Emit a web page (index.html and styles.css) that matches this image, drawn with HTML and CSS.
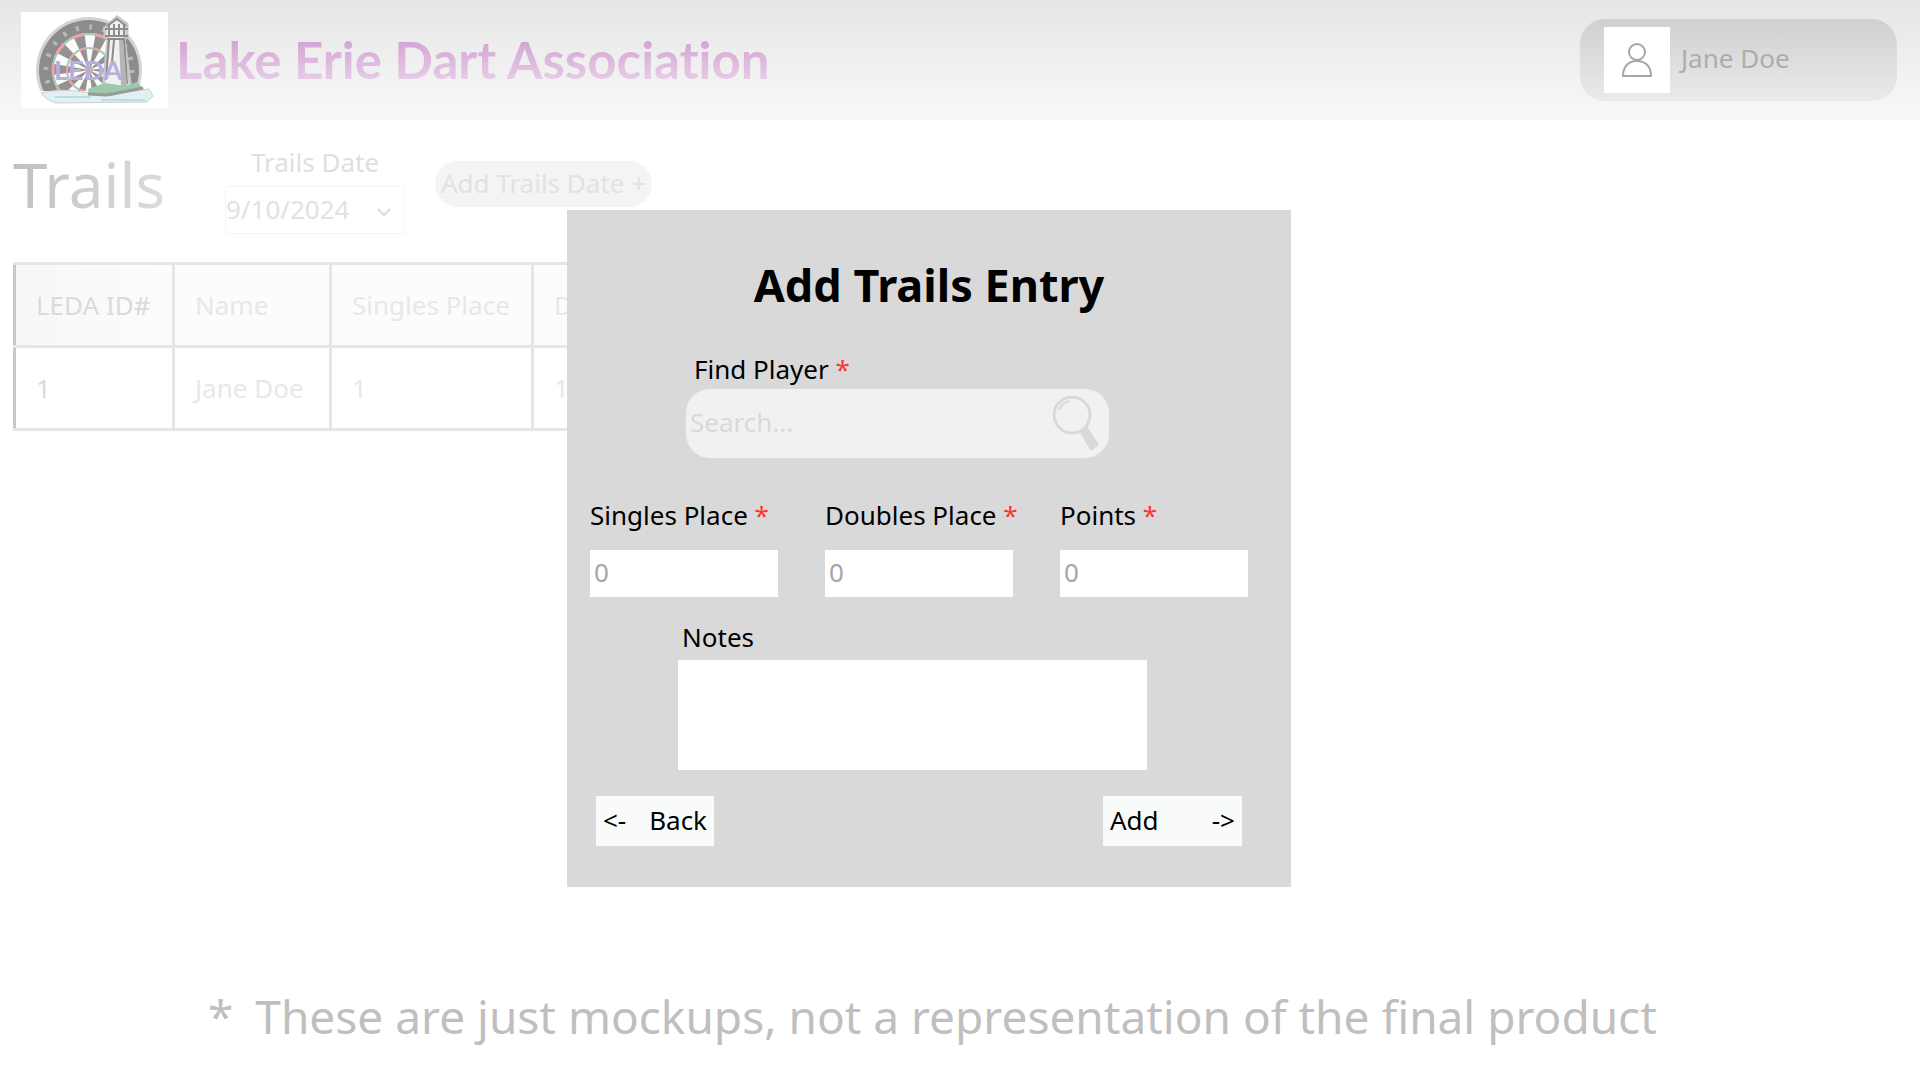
FILE: index.html
```html
<!DOCTYPE html>
<html lang="en">
<head>
<meta charset="utf-8">
<meta name="viewport" content="width=device-width, initial-scale=1">
<title>Trails - Lake Erie Dart Association</title>
<link rel="stylesheet" href="styles.css">
</head>
<body>
<div class="page">
  <header class="site-header">
    <a class="brand" href="#">
      <svg class="logo" viewBox="0 0 147 96" role="img" aria-label="LEDA logo">
        <defs>
          <clipPath id="horizon"><rect width="147" height="79"/></clipPath>
        </defs>
        <rect width="147" height="96" fill="#fff"/>
        <g clip-path="url(#horizon)" fill="none">
          <circle cx="68" cy="58" r="53" fill="#d4d4d4"/>
          <circle cx="68" cy="58" r="50" fill="#8c8c8c"/>
          <circle cx="68" cy="58" r="43" stroke="#b9b9b9" stroke-width="5" stroke-dasharray="3 10.5"/>
          <circle cx="68" cy="58" r="37" fill="#fbfbfb"/>
          <circle cx="68" cy="58" r="19" stroke="#939393" stroke-width="32" stroke-dasharray="5.97 5.97" stroke-dashoffset="3"/>
          <circle cx="68" cy="58" r="36" stroke="#9fceb4" stroke-width="2"/>
          <circle cx="68" cy="58" r="36" stroke="#eda3a3" stroke-width="3" stroke-dasharray="11.3 11.3" stroke-dashoffset="5.6"/>
          <circle cx="68" cy="58" r="22" stroke="#9fceb4" stroke-width="2"/>
          <circle cx="68" cy="58" r="22" stroke="#eda3a3" stroke-width="2" stroke-dasharray="6.9 6.9" stroke-dashoffset="3.4"/>
          <circle cx="68" cy="58" r="4" fill="#eda3a3" stroke="#9fceb4"/>
        </g>
        <path d="M84 24 84 16 88 12 96 5 106 12 106 25 103 27 110 78 82 78 87 27Z" fill="#f0f0f0" stroke="#c8c8c8" stroke-width="3"/>
        <path d="M86 14 96 7 105 14M88 13V23M93 12V23M98 12V23M103 12V23M84 17H107M84 24H107" fill="none" stroke="#8d8d8d" stroke-width="2"/>
        <path d="M86 27H104M88 28 85 68M93 28 91 50M103 28 106 72" fill="none" stroke="#8a8a8a" stroke-width="2"/>
        <path d="M98 28 100 74H106L102 28Z" fill="#b5b5b5"/>
        <path d="M20 81Q40 76 62 80T128 77L132 84 126 90 35 91Q25 88 20 81Z" fill="#e2f0f3" stroke="#cfcfcf"/>
        <path d="M34 85H70M80 88H124" stroke="#b9dde4" stroke-width="2"/>
        <path d="M67 77 84 71 104 74 116 70 123 77 90 84 68 81Z" fill="#9cc8ac"/>
        <path d="M67 82 86 83 122 76" fill="none" stroke="#999" stroke-width="3"/>
        <text class="logo-text" x="33" y="68">LEDA</text>
      </svg>
      <span class="brand-name">Lake Erie Dart Association</span>
    </a>
    <button class="account" type="button">
      <span class="avatar">
        <svg viewBox="0 0 30 34" width="30" height="34" fill="none" stroke="#a6a6a6" stroke-width="2" aria-hidden="true">
          <circle cx="15" cy="9" r="8"/>
          <path d="M1 33C1 23 7 18 15 18S29 23 29 33Z"/>
        </svg>
      </span>
      <span class="account-name">Jane Doe</span>
    </button>
  </header>

  <main class="content">
    <div class="toolbar">
      <h1 class="page-title">Trails</h1>
      <div class="date-field">
        <label for="trails-date">Trails Date</label>
        <div class="select-wrap">
          <select id="trails-date"><option>9/10/2024</option></select>
          <svg class="chevron" viewBox="0 0 14 8" width="14" height="8" fill="none" stroke="#dcdcdc" stroke-width="2" aria-hidden="true"><path d="M1 1 7 7 13 1"/></svg>
        </div>
      </div>
      <button class="add-date" type="button">Add Trails Date +</button>
    </div>

    <table class="entries">
      <thead>
        <tr><th>LEDA ID#</th><th>Name</th><th>Singles Place</th><th>Doubles Place</th></tr>
      </thead>
      <tbody>
        <tr><td>1</td><td>Jane Doe</td><td>1</td><td>1</td></tr>
      </tbody>
    </table>
  </main>

  <footer class="disclaimer"><span>*</span><span>These are just mockups, not a representation of the final product</span></footer>
</div>

<div class="overlay">
  <form class="modal" role="dialog" aria-labelledby="modal-title">
    <h2 class="modal-title" id="modal-title">Add Trails Entry</h2>

    <div class="player">
      <label for="player">Find Player <span class="required">*</span></label>
      <div class="search">
        <input id="player" type="text" placeholder="Search...">
        <svg viewBox="0 0 46 58" width="46" height="58" fill="none" stroke="#d9d9d9" aria-hidden="true">
          <circle cx="19" cy="20" r="18" stroke-width="3"/>
          <path d="M6 15Q9 7 17 6" stroke-width="2"/>
          <path d="M26 36 34 31 46 50 38 56Z" fill="#d9d9d9" stroke="none"/>
        </svg>
      </div>
    </div>

    <div class="scores">
      <div class="score"><label for="singles">Singles Place <span class="required">*</span></label><input id="singles" type="text" placeholder="0"></div>
      <div class="score"><label for="doubles">Doubles Place <span class="required">*</span></label><input id="doubles" type="text" placeholder="0"></div>
      <div class="score"><label for="points">Points <span class="required">*</span></label><input id="points" type="text" placeholder="0"></div>
    </div>

    <div class="notes">
      <label for="notes">Notes</label>
      <textarea id="notes"></textarea>
    </div>

    <div class="actions">
      <button class="back" type="button"><span>&lt;-</span><span>Back</span></button>
      <button class="add" type="button"><span>Add</span><span>-&gt;</span></button>
    </div>
  </form>
</div>
</body>
</html>
```
FILE: styles.css
```css
* {
  box-sizing: border-box;
}

body {
  margin: 0;
  background: #fff;
  color: #000;
  font: 26px/36px "Noto Sans", sans-serif;
}

button,
input,
select,
textarea {
  margin: 0;
  padding: 0;
  border: 0;
  border-radius: 0;
  background: none;
  color: inherit;
  font: inherit;
}

label {
  display: block;
  white-space: nowrap;
}

.page {
  display: flex;
  flex-direction: column;
  min-height: 100vh;
}

/* Header */
.site-header {
  display: flex;
  align-items: center;
  justify-content: space-between;
  height: 120px;
  padding: 0 23px 0 21px;
  background: linear-gradient(#e6e6e6, #f8f8f8);
}

.brand {
  display: flex;
  align-items: center;
  gap: 8px;
  text-decoration: none;
}

.logo {
  width: 147px;
  height: 96px;
}

.logo-text {
  fill: #b9addd;
  font: 700 27px Lato, sans-serif;
}

.brand-name {
  background: linear-gradient(#d4a4d4 20%, #e6cbe6 80%);
  background-clip: text;
  color: transparent;
  font: 700 51px/64px Lato, sans-serif;
  font-variant-ligatures: none;
}

.account {
  display: flex;
  align-items: center;
  gap: 11px;
  width: 317px;
  height: 82px;
  padding: 0 24px;
  border-radius: 25px;
  background: linear-gradient(#d0d0d0, #eaeaea);
  color: #adadad;
}

.account-name {
  padding-bottom: 4px;
}

.avatar {
  display: grid;
  place-items: center;
  width: 66px;
  height: 66px;
  background: #fff;
}

/* Page content */
.content {
  flex: 1;
  padding: 24px 13px;
}

.toolbar {
  display: flex;
  align-items: flex-start;
  gap: 30px;
  margin-bottom: 28px;
}

.page-title {
  width: 182px;
  margin: 0;
  background: linear-gradient(100deg, #c0c0c0, #e2e2e2);
  background-clip: text;
  color: transparent;
  font-size: 62px;
  font-weight: 400;
  line-height: 80px;
}

.date-field {
  width: 180px;
  color: #dfdfdf;
}

.date-field label {
  margin-bottom: 6px;
  text-align: center;
}

.select-wrap {
  position: relative;
}

.select-wrap select {
  width: 100%;
  height: 48px;
  padding-bottom: 2px;
  border: 1px solid #f5f5f5;
  border-radius: 4px;
  appearance: none;
  color: #e2e2e2;
}

.chevron {
  position: absolute;
  top: 22px;
  right: 14px;
}

.add-date {
  width: 217px;
  height: 46px;
  margin-top: 17px;
  padding-bottom: 2px;
  border-radius: 23px;
  background: #f4f4f4;
  color: #e2e2e2;
  white-space: nowrap;
}

.entries {
  border-collapse: collapse;
  color: #e8e8e8;
  white-space: nowrap;
}

.entries th,
.entries td {
  height: 83px;
  padding: 0 20px;
  border: 3px solid #e6e6e6;
  font-weight: 400;
  text-align: left;
}

.entries th {
  background: #fcfcfc;
}

.entries th:first-child,
.entries td:first-child {
  width: 159px;
  border-left-color: #c8c8c8;
  color: #dadada;
}

.entries th:first-child {
  background: linear-gradient(90deg, #f7f7f7, #fcfcfc);
}

.entries th:nth-child(2) {
  width: 157px;
}

.entries th:nth-child(3) {
  width: 202px;
}

.disclaimer {
  display: flex;
  gap: 22px;
  padding: 0 208px 34px;
  color: #bfbfbf;
  font-size: 46px;
  line-height: 60px;
  white-space: nowrap;
}

/* Add entry dialog */
.overlay {
  position: absolute;
  top: 0;
  left: 0;
  display: flex;
  justify-content: center;
  width: 100%;
  padding: 210px 62px 0 0;
}

.modal {
  width: 724px;
  padding: 45px 42px 41px 23px;
  background: #d9d9d9;
}

.modal-title {
  margin: 0 0 36px 19px;
  font-size: 45px;
  font-weight: 700;
  line-height: 60px;
  text-align: center;
}

.required {
  color: #ff3131;
}

.player {
  width: 423px;
  margin: 0 0 39px 96px;
}

.player label {
  margin-bottom: 2px;
  padding-left: 8px;
}

.search {
  display: flex;
  align-items: center;
  height: 69px;
  padding: 0 10px 0 4px;
  border-radius: 24px;
  background: #f1f1f1;
}

.search input {
  flex: 1;
  min-width: 0;
  padding-bottom: 4px;
}

.search input::placeholder {
  color: #d9d9d9;
  opacity: 1;
}

.scores {
  display: grid;
  grid-template-columns: repeat(3, 188px);
  gap: 47px;
  margin-bottom: 22px;
}

.score label {
  margin-bottom: 17px;
}

.score input {
  width: 100%;
  height: 47px;
  padding: 0 4px 4px;
  background: #fff;
}

.score input::placeholder {
  color: #a6a6a6;
  opacity: 1;
}

.notes {
  width: 469px;
  margin: 0 0 26px 88px;
}

.notes label {
  margin-bottom: 5px;
  padding-left: 4px;
}

.notes textarea {
  display: block;
  width: 100%;
  height: 110px;
  background: #fff;
  resize: none;
}

.actions {
  display: flex;
  justify-content: space-between;
  padding: 0 7px 0 6px;
}

.actions button {
  display: flex;
  align-items: center;
  justify-content: space-between;
  height: 50px;
  padding: 0 7px 2px;
  background: #f9fbfa;
}

.actions .back {
  width: 118px;
}

.actions .add {
  width: 139px;
}
```
